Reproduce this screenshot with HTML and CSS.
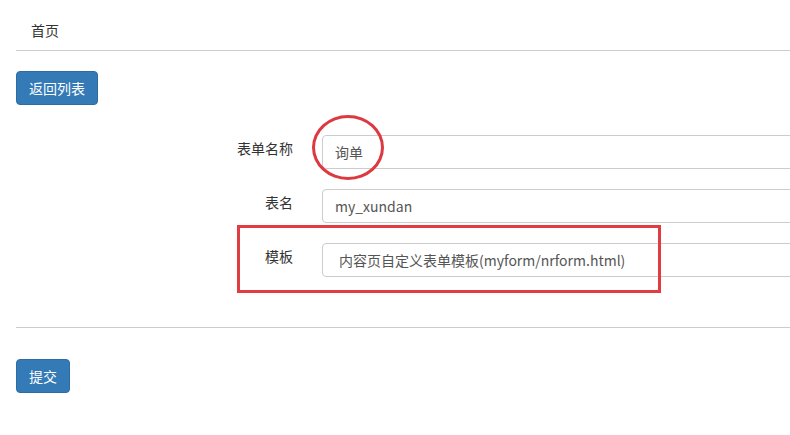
FILE: index.html
```html
<!DOCTYPE html>
<html lang="zh-CN">
<head>
  <meta charset="UTF-8" />
  <title>表单编辑</title>
  <link rel="stylesheet" href="styles.css">
</head>
<body>
  <div class="page">
    <div class="breadcrumb">首页</div>

    <button type="button" class="btn">返回列表</button>

    <form class="form">
      <div class="form-row">
        <label for="title">表单名称</label>
        <input type="text" id="title" value="询单" />
      </div>
      <div class="form-row">
        <label for="table">表名</label>
        <input type="text" id="table" value="my_xundan" />
      </div>
      <div class="form-row">
        <label for="tpl">模板</label>
        <select id="tpl" class="select">
          <option>内容页自定义表单模板(myform/nrform.html)</option>
        </select>
      </div>

      <hr class="divider" />

      <button type="submit" class="btn">提交</button>
    </form>

    <!-- annotations drawn on top of the screenshot -->
    <div class="mark-circle"></div>
    <div class="mark-box"></div>
  </div>
</body>
</html>
```

FILE: styles.css
```css
html, body {
  margin: 0;
  padding: 0;
  background: #fff;
}
body {
  font-family: "Noto Sans CJK SC", "Microsoft YaHei", sans-serif;
  font-size: 14px;
  line-height: 20px;
  color: #333;
  overflow: hidden;
}
.page {
  position: relative;
  padding-left: 16px;
  min-height: 435px;
}
.breadcrumb {
  height: 51px;
  box-sizing: border-box;
  padding: 20px 0 0 15px;
  line-height: 20px;
  border-bottom: 1px solid #ccc;
}
.btn {
  display: block;
  margin-top: 20px;
  height: 34px;
  padding: 6px 12px;
  font-family: inherit;
  font-size: 14px;
  line-height: 20px;
  color: #fff;
  background-color: #337ab7;
  border: 1px solid #2e6da4;
  border-radius: 4px;
  cursor: pointer;
}
.form {
  margin-top: 30px;
}
.form-row {
  display: flex;
  align-items: flex-start;
  margin-bottom: 20px;
}
.form-row label {
  width: 277px;
  flex: none;
  text-align: right;
  padding-top: 3px;
  margin-right: 29px;
}
.form-row input,
.form-row .select {
  flex: none;
  width: 520px;
  height: 34px;
  box-sizing: border-box;
  padding: 6px 12px;
  font-family: inherit;
  font-size: 14px;
  color: #555;
  background: #fff;
  border: 1px solid #ccc;
  border-radius: 4px;
  outline: none;
}
.form-row .select {
  appearance: none;
  -webkit-appearance: none;
  padding-left: 16px;
}
.divider {
  margin: 50px 0 0 0;
  border: 0;
  border-top: 1px solid #ccc;
}
.form .btn {
  margin-top: 31px;
}
.mark-circle {
  position: absolute;
  left: 312px;
  top: 115px;
  width: 72px;
  height: 65px;
  box-sizing: border-box;
  border: 3px solid #dc3a40;
  border-radius: 50%;
}
.mark-box {
  position: absolute;
  left: 237px;
  top: 225px;
  width: 424px;
  height: 68px;
  box-sizing: border-box;
  border: 3px solid #e03c42;
}
```
